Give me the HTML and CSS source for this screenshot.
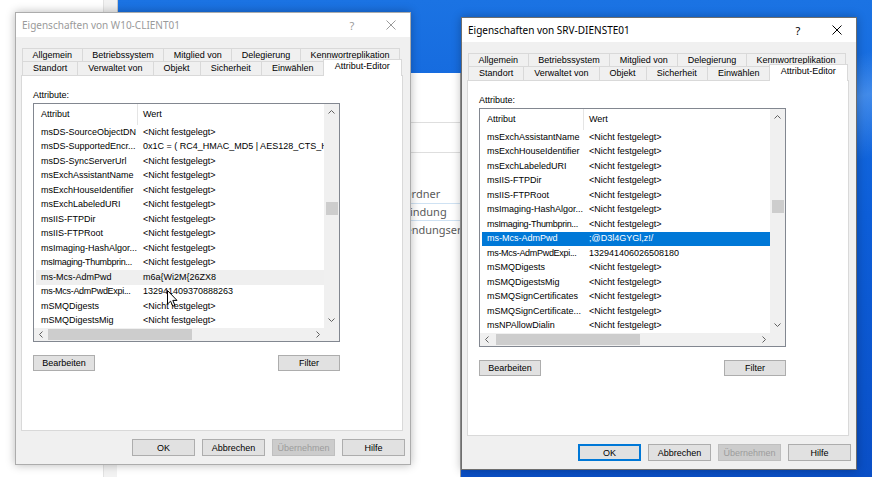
FILE: index.html
```html
<!DOCTYPE html>
<html lang="de">
<head>
<meta charset="utf-8">
<title>Eigenschaften</title>
<link rel="stylesheet" href="styles.css">
</head>
<body>
<div class="desktop">

  <div class="win-a"><div class="win-a-strip"></div></div>

  <div class="win-b">
    <div class="b-head"></div>
    <div class="b-sub"></div>
    <div class="b-list">
      <div class="b-row b-r1">Ordner</div>
      <div class="b-row b-r2 b-hot">Verbindung</div>
      <div class="b-row b-r3">Anwendungserweiterung</div>
    </div>
  </div>

  <section class="dialog dlg-left inactive">
    <header class="titlebar">
      <span class="title">Eigenschaften von W10-CLIENT01</span>
      <span class="tb-help">?</span>
      <span class="tb-close"><svg width="10" height="10" viewBox="0 0 10 10"><path d="M0.5 0.5 L9.5 9.5 M9.5 0.5 L0.5 9.5" stroke="currentColor" stroke-width="1" fill="none"/></svg></span>
    </header>
    <div class="dbody">
      <div class="tabs">
        <div class="tabrow back">
          <span class="tab">Allgemein</span>
          <span class="tab">Betriebssystem</span>
          <span class="tab">Mitglied von</span>
          <span class="tab">Delegierung</span>
          <span class="tab">Kennwortreplikation</span>
        </div>
        <div class="tabrow front">
          <span class="tab">Standort</span>
          <span class="tab">Verwaltet von</span>
          <span class="tab">Objekt</span>
          <span class="tab">Sicherheit</span>
          <span class="tab">Einwählen</span>
          <span class="tab active">Attribut-Editor</span>
        </div>
      </div>
      <div class="panel">
        <div class="label">Attribute:</div>
        <div class="lv">
          <div class="lv-main">
            <div class="lv-head"><span class="c1">Attribut</span><span class="c2">Wert</span></div>
            <div class="lv-row"><span class="c1">msDS-SourceObjectDN</span><span class="c2">&lt;Nicht festgelegt&gt;</span></div>
            <div class="lv-row"><span class="c1">msDS-SupportedEncr...</span><span class="c2">0x1C = ( RC4_HMAC_MD5 | AES128_CTS_HMAC_SHA1_96 | AES256_CTS_HMAC_SHA1_96 )</span></div>
            <div class="lv-row"><span class="c1">msDS-SyncServerUrl</span><span class="c2">&lt;Nicht festgelegt&gt;</span></div>
            <div class="lv-row"><span class="c1">msExchAssistantName</span><span class="c2">&lt;Nicht festgelegt&gt;</span></div>
            <div class="lv-row"><span class="c1">msExchHouseIdentifier</span><span class="c2">&lt;Nicht festgelegt&gt;</span></div>
            <div class="lv-row"><span class="c1">msExchLabeledURI</span><span class="c2">&lt;Nicht festgelegt&gt;</span></div>
            <div class="lv-row"><span class="c1">msIIS-FTPDir</span><span class="c2">&lt;Nicht festgelegt&gt;</span></div>
            <div class="lv-row"><span class="c1">msIIS-FTPRoot</span><span class="c2">&lt;Nicht festgelegt&gt;</span></div>
            <div class="lv-row"><span class="c1">msImaging-HashAlgor...</span><span class="c2">&lt;Nicht festgelegt&gt;</span></div>
            <div class="lv-row"><span class="c1 tight">msImaging-Thumbprin...</span><span class="c2">&lt;Nicht festgelegt&gt;</span></div>
            <div class="lv-row sel-off"><span class="c1">ms-Mcs-AdmPwd</span><span class="c2">m6a{Wi2M{26ZX8</span></div>
            <div class="lv-row"><span class="c1 tight">ms-Mcs-AdmPwdExpi...</span><span class="c2">132941409370888263</span></div>
            <div class="lv-row"><span class="c1">mSMQDigests</span><span class="c2">&lt;Nicht festgelegt&gt;</span></div>
            <div class="lv-row"><span class="c1">mSMQDigestsMig</span><span class="c2">&lt;Nicht festgelegt&gt;</span></div>
          </div>
          <div class="vscroll">
            <span class="sarrow"><svg width="7" height="4" viewBox="0 0 7 4"><path d="M0.5 3.5 L3.5 0.5 L6.5 3.5" fill="none" stroke="#606060"/></svg></span>
            <div class="vtrack"><div class="vthumb" style="margin-top:82px"></div></div>
            <span class="sarrow"><svg width="7" height="4" viewBox="0 0 7 4"><path d="M0.5 0.5 L3.5 3.5 L6.5 0.5" fill="none" stroke="#606060"/></svg></span>
          </div>
          <div class="hscroll">
            <span class="harrow"><svg width="4" height="7" viewBox="0 0 4 7"><path d="M3.5 0.5 L0.5 3.5 L3.5 6.5" fill="none" stroke="#606060"/></svg></span>
            <div class="htrack"><div class="hthumb" style="margin-left:1px"></div></div>
            <span class="harrow"><svg width="4" height="7" viewBox="0 0 4 7"><path d="M0.5 0.5 L3.5 3.5 L0.5 6.5" fill="none" stroke="#606060"/></svg></span>
          </div>
          <div class="corner"></div>
        </div>
        <div class="panel-buttons">
          <button class="btn small">Bearbeiten</button>
          <button class="btn small">Filter</button>
        </div>
      </div>
      <div class="dlg-buttons">
        <button class="btn">OK</button>
        <button class="btn">Abbrechen</button>
        <button class="btn disabled">Übernehmen</button>
        <button class="btn">Hilfe</button>
      </div>
    </div>
  </section>

  <section class="dialog dlg-right">
    <header class="titlebar">
      <span class="title">Eigenschaften von SRV-DIENSTE01</span>
      <span class="tb-help">?</span>
      <span class="tb-close"><svg width="10" height="10" viewBox="0 0 10 10"><path d="M0.5 0.5 L9.5 9.5 M9.5 0.5 L0.5 9.5" stroke="currentColor" stroke-width="1" fill="none"/></svg></span>
    </header>
    <div class="dbody">
      <div class="tabs">
        <div class="tabrow back">
          <span class="tab">Allgemein</span>
          <span class="tab">Betriebssystem</span>
          <span class="tab">Mitglied von</span>
          <span class="tab">Delegierung</span>
          <span class="tab">Kennwortreplikation</span>
        </div>
        <div class="tabrow front">
          <span class="tab">Standort</span>
          <span class="tab">Verwaltet von</span>
          <span class="tab">Objekt</span>
          <span class="tab">Sicherheit</span>
          <span class="tab">Einwählen</span>
          <span class="tab active">Attribut-Editor</span>
        </div>
      </div>
      <div class="panel">
        <div class="label">Attribute:</div>
        <div class="lv">
          <div class="lv-main">
            <div class="lv-head"><span class="c1">Attribut</span><span class="c2">Wert</span></div>
            <div class="lv-row"><span class="c1">msExchAssistantName</span><span class="c2">&lt;Nicht festgelegt&gt;</span></div>
            <div class="lv-row"><span class="c1">msExchHouseIdentifier</span><span class="c2">&lt;Nicht festgelegt&gt;</span></div>
            <div class="lv-row"><span class="c1">msExchLabeledURI</span><span class="c2">&lt;Nicht festgelegt&gt;</span></div>
            <div class="lv-row"><span class="c1">msIIS-FTPDir</span><span class="c2">&lt;Nicht festgelegt&gt;</span></div>
            <div class="lv-row"><span class="c1">msIIS-FTPRoot</span><span class="c2">&lt;Nicht festgelegt&gt;</span></div>
            <div class="lv-row"><span class="c1">msImaging-HashAlgor...</span><span class="c2">&lt;Nicht festgelegt&gt;</span></div>
            <div class="lv-row"><span class="c1 tight">msImaging-Thumbprin...</span><span class="c2">&lt;Nicht festgelegt&gt;</span></div>
            <div class="lv-row sel"><span class="c1">ms-Mcs-AdmPwd</span><span class="c2">;@D3l4GYGl,z!/</span></div>
            <div class="lv-row"><span class="c1 tight">ms-Mcs-AdmPwdExpi...</span><span class="c2">132941406026508180</span></div>
            <div class="lv-row"><span class="c1">mSMQDigests</span><span class="c2">&lt;Nicht festgelegt&gt;</span></div>
            <div class="lv-row"><span class="c1">mSMQDigestsMig</span><span class="c2">&lt;Nicht festgelegt&gt;</span></div>
            <div class="lv-row"><span class="c1">mSMQSignCertificates</span><span class="c2">&lt;Nicht festgelegt&gt;</span></div>
            <div class="lv-row"><span class="c1">mSMQSignCertificate...</span><span class="c2">&lt;Nicht festgelegt&gt;</span></div>
            <div class="lv-row"><span class="c1">msNPAllowDialin</span><span class="c2">&lt;Nicht festgelegt&gt;</span></div>
          </div>
          <div class="vscroll">
            <span class="sarrow"><svg width="7" height="4" viewBox="0 0 7 4"><path d="M0.5 3.5 L3.5 0.5 L6.5 3.5" fill="none" stroke="#606060"/></svg></span>
            <div class="vtrack"><div class="vthumb" style="margin-top:75px"></div></div>
            <span class="sarrow"><svg width="7" height="4" viewBox="0 0 7 4"><path d="M0.5 0.5 L3.5 3.5 L6.5 0.5" fill="none" stroke="#606060"/></svg></span>
          </div>
          <div class="hscroll">
            <span class="harrow"><svg width="4" height="7" viewBox="0 0 4 7"><path d="M3.5 0.5 L0.5 3.5 L3.5 6.5" fill="none" stroke="#606060"/></svg></span>
            <div class="htrack"><div class="hthumb" style="margin-left:3px"></div></div>
            <span class="harrow"><svg width="4" height="7" viewBox="0 0 4 7"><path d="M0.5 0.5 L3.5 3.5 L0.5 6.5" fill="none" stroke="#606060"/></svg></span>
          </div>
          <div class="corner"></div>
        </div>
        <div class="panel-buttons">
          <button class="btn small">Bearbeiten</button>
          <button class="btn small">Filter</button>
        </div>
      </div>
      <div class="dlg-buttons">
        <button class="btn default">OK</button>
        <button class="btn">Abbrechen</button>
        <button class="btn disabled">Übernehmen</button>
        <button class="btn">Hilfe</button>
      </div>
    </div>
  </section>

  <svg class="cursor" width="12" height="18" viewBox="0 0 12 18"><path d="M0.5 0.5 L0.5 14 L3.6 11.2 L5.8 16.2 L7.9 15.3 L5.8 10.4 L10 10.4 Z" fill="#fff" stroke="#000" stroke-width="1" stroke-linejoin="round"/></svg>
</div>
</body>
</html>
```

FILE: styles.css
```css
* { box-sizing: border-box; }
html, body { margin: 0; padding: 0; }
body {
  width: 872px;
  height: 477px;
  overflow: hidden;
  font-family: "Liberation Sans", Arial, sans-serif;
  font-size: 9px;
  color: #000;
}

.desktop {
  position: relative;
  width: 872px;
  height: 477px;
  overflow: hidden;
  background:
    linear-gradient(165deg, rgba(255,255,255,0) 0%, rgba(255,255,255,0) 40%, rgba(150,200,255,0.35) 46%, rgba(255,255,255,0) 55%),
    linear-gradient(180deg, #1b73e3 0%, #0d5ed8 45%, #0a4fc6 100%);
}

/* background windows */
.win-a {
  position: absolute;
  left: 0;
  top: 0;
  width: 118px;
  height: 477px;
  background: #fff;
  border-right: 1px solid #c9c9c9;
  display: flex;
  justify-content: flex-end;
}
.win-a-strip {
  width: 14px;
  background: #f2f2f2;
  border-left: 1px solid #e2e2e2;
}

.win-b {
  position: absolute;
  left: 117px;
  top: 73px;
  width: 344px;
  height: 404px;
  background: #fff;
  border-right: 1px solid #9c9c9c;
  font-family: "Noto Sans", "Open Sans", sans-serif;
  font-size: 11px;
  color: #5a5a5a;
}
.b-head { height: 50px; border-bottom: 1px solid #dedede; }
.b-sub { height: 30px; border-bottom: 1px solid #dedede; }
.b-list { margin-top: 32px; margin-left: 294px; overflow: hidden; }
.b-row { height: 18px; line-height: 17px; white-space: nowrap; }
.b-hot { border-top: 1px solid #cfe2f3; border-bottom: 1px solid #cfe2f3; line-height: 15px; }
.b-r1 { text-indent: -8px; }
.b-r2 { text-indent: -25px; }
.b-r3 { text-indent: -28px; }

/* dialogs */
.dialog {
  position: absolute;
  width: 396px;
  height: 453px;
  background: #f0f0f0;
  border: 1px solid #9e9e9e;
  box-shadow: 0 0 9px rgba(0, 0, 0, 0.28);
  display: flex;
  flex-direction: column;
}
.dlg-left { left: 15px; top: 12px; border-color: #acacac; }
.dlg-right { left: 461px; top: 17px; border-color: #6e6e6e; }

.titlebar {
  flex: none;
  height: 24px;
  background: #fff;
  display: flex;
  align-items: center;
  padding-left: 6px;
  font-family: "Noto Sans", "Open Sans", sans-serif;
  font-size: 10px;
  color: #000;
}
.title { flex: 1; white-space: nowrap; }
.tb-help { width: 40px; text-align: center; font-size: 11px; }
.tb-close { width: 38px; display: flex; justify-content: center; align-items: center; }
.inactive .titlebar { color: #9a9a9a; }

.dbody {
  flex: 1;
  display: flex;
  flex-direction: column;
  padding: 11px 7px 8px 5px;
}

/* tabs */
.tabs { display: flex; flex-direction: column; margin: 0 3px 0 1px; }
.tabrow { display: flex; padding-left: 1px; }
.tabrow.back { height: 13px; }
.tabrow.front { height: 14px; position: relative; z-index: 1; }
.tab {
  flex: 1 1 auto;
  padding: 0 4px;
  margin-left: -1px;
  text-align: center;
  white-space: nowrap;
  background: #f0f0f0;
  border: 1px solid #d9d9d9;
  border-bottom: none;
  line-height: 12px;
}
.front .tab { line-height: 13px; }
.tab.active {
  position: relative;
  z-index: 2;
  background: #fff;
  margin: -2px -2px -1px -2px;
  padding: 0 5px;
  line-height: 12px;
}

/* panel */
.panel {
  flex: none;
  height: 356px;
  background: #fff;
  border: 1px solid #d9d9d9;
  padding: 13px 0 0 11px;
}
.label { height: 12px; line-height: 12px; margin-bottom: 2px; }

/* list view */
.lv {
  width: 307px;
  height: 239px;
  border: 1px solid #828790;
  background: #fff;
  display: grid;
  grid-template-columns: 290px 15px;
  grid-template-rows: 224px 13px;
}
.lv-main { overflow: hidden; }
.lv-head, .lv-row {
  display: flex;
  align-items: center;
  margin-left: 2px;
  width: 288px;
  white-space: nowrap;
}
.lv-head { height: 21px; }
.lv-head .c1 { border-right: 1px solid #e5e5e5; height: 21px; line-height: 21px; }
.lv-row { height: 14.5px; }
.c1 { flex: none; width: 102px; padding-left: 5px; overflow: hidden; line-height: 11px; }
.c2 { flex: 1; padding-left: 5px; overflow: hidden; line-height: 11px; }
.tight { letter-spacing: -0.3px; }
.sel-off { background: #efefef; }
.sel { background: #0078d7; color: #fff; }

.vscroll {
  background: #f0f0f0;
  display: flex;
  flex-direction: column;
  align-items: center;
}
.sarrow { flex: none; height: 16px; display: flex; align-items: center; justify-content: center; width: 100%; }
.vtrack { flex: 1; width: 100%; display: flex; flex-direction: column; align-items: center; }
.vthumb { width: 12px; height: 13px; background: #cdcdcd; }

.hscroll {
  background: #f0f0f0;
  display: flex;
  align-items: center;
}
.harrow { flex: none; width: 13px; height: 13px; display: flex; align-items: center; justify-content: center; }
.htrack { flex: 1; display: flex; align-items: center; height: 13px; }
.hthumb { width: 144px; height: 11px; background: #cdcdcd; }
.corner { background: #f0f0f0; }

.panel-buttons {
  width: 307px;
  margin-top: 13px;
  display: flex;
  justify-content: space-between;
}

/* buttons */
.btn {
  font-family: "Liberation Sans", Arial, sans-serif;
  font-size: 9px;
  color: #000;
  width: 63px;
  height: 17px;
  padding: 0;
  margin: 0;
  background: #e1e1e1;
  border: 1px solid #adadad;
  border-radius: 0;
}
.btn.small { width: 62px; height: 16px; }
.btn.disabled { background: #cccccc; border-color: #bfbfbf; color: #9c9c9c; }
.btn.default { border-color: #0078d7; box-shadow: inset 0 0 0 1px #0078d7; }

.dlg-buttons {
  display: flex;
  justify-content: flex-end;
  gap: 7px;
  margin: 8px -2px 0 0;
}

.cursor {
  position: absolute;
  left: 167px;
  top: 290px;
}
```
